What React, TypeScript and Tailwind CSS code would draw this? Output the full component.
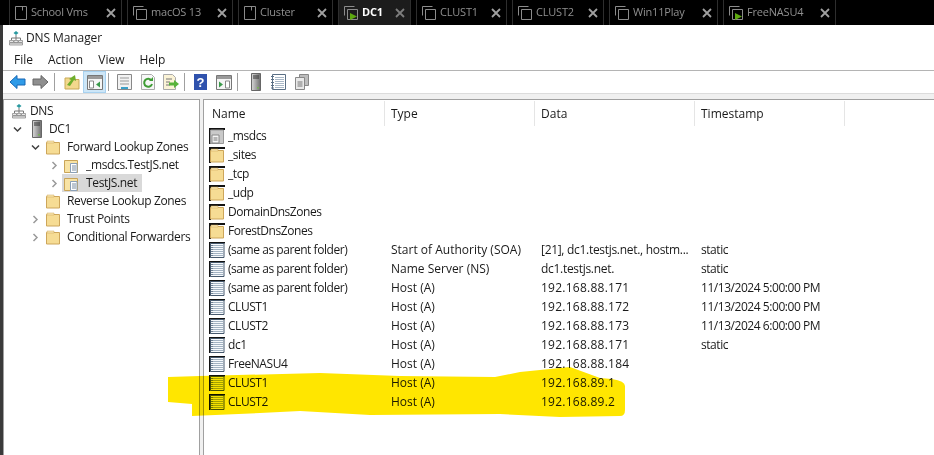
import type { ReactNode } from 'react';

const FONT = "font-['Open_Sans',_sans-serif]";

function PageIcon() {
  return (
    <svg width="14" height="16" viewBox="0 0 14 16" fill="none" stroke="#8a8a8a" strokeWidth="1">
      <path d="M1.500 1.500h11v13h-11z" />
      <path d="M8.500 1.500v4" stroke="#8a8a8a" />
    </svg>
  );
}

function StackIcon({ running }: { running?: boolean }) {
  return (
    <svg width="16" height="16" viewBox="0 0 16 16" fill="none" stroke="#8c8c8c" strokeWidth="1">
      <path d="M1.500 10.500v-9h10" />
      <path d="M4.500 4.500h10v10h-10z" />
      {running && <path d="M7 8l7 3.500-7 3.500z" fill="#5da80f" stroke="none" />}
    </svg>
  );
}

function CloseIcon({ active }: { active?: boolean }) {
  return (
    <svg width="10" height="10" viewBox="0 0 10 10" stroke={active ? '#7d7d7d' : '#a0a0a0'} strokeWidth="1.800">
      <path d="M1 1l8 8M9 1l-8 8" />
    </svg>
  );
}

interface Tab {
  label: string;
  width: string;
  icon: ReactNode;
  active?: boolean;
}

const tabs: Tab[] = [
  { label: 'School Vms', width: 'w-[113px]', icon: <PageIcon /> },
  { label: 'macOS 13', width: 'w-[106px]', icon: <StackIcon /> },
  { label: 'Cluster', width: 'w-[95px]', icon: <PageIcon /> },
  { label: 'DC1', width: 'w-[73px]', icon: <StackIcon running />, active: true },
  { label: 'CLUST1', width: 'w-[91px]', icon: <StackIcon /> },
  { label: 'CLUST2', width: 'w-[92px]', icon: <StackIcon /> },
  { label: 'Win11Play', width: 'w-[109px]', icon: <StackIcon /> },
  { label: 'FreeNASU4', width: 'w-[113px]', icon: <StackIcon running /> },
];

function ManagerIcon() {
  return (
    <svg width="14" height="16" viewBox="0 0 14 16">
      <path d="M7 1l2.500 2L7 5 4.500 3z" fill="#2b9aa0" />
      <path d="M7 5v3M2.500 10V8h9v2M7 8v2" stroke="#777" fill="none" />
      <path d="M.5 10.500h4v2h-4zM5 10.500h4v2H5zM9.500 10.500h4v2h-4zM.5 13h13v2H.5z" fill="#e8e8e8" stroke="#808080" strokeWidth=".7" />
    </svg>
  );
}

function ToolIcon({ name }: { name: string }) {
  switch (name) {
    case 'back':
      return (
        <svg width="17" height="16" viewBox="0 0 17 16">
          <path d="M1 8l7-6.500V5h8v6H8v3.500z" fill="#2f9be8" stroke="#1667b5" />
        </svg>
      );
    case 'forward':
      return (
        <svg width="17" height="16" viewBox="0 0 17 16">
          <path d="M16 8L9 1.500V5H1v6h8v3.500z" fill="#8f8f8f" stroke="#666" />
        </svg>
      );
    case 'up':
      return (
        <svg width="16" height="16" viewBox="0 0 16 16">
          <path d="M1 4h6l1 1.500h7V15H1z" fill="#f3d88d" stroke="#c9a956" />
          <path d="M3 11l4-5-2-1 6-4 1 6-2-1-4 6z" fill="#6fae2c" />
        </svg>
      );
    case 'tree':
    case 'action':
      return (
        <svg width="16" height="15" viewBox="0 0 16 15" fill="none">
          <path d="M.5.500h15v14H.5z" fill="#f5f5f5" stroke="#777" />
          <path d="M1 1h14v3H1z" fill="#9a9a9a" />
          {name === 'tree' ? (
            <>
              <path d="M2.500 6h4v7h-4z" fill="#fff" stroke="#888" />
              <path d="M13 6.500v6l-4-3z" fill="#3a9a4a" />
            </>
          ) : (
            <>
              <path d="M9.500 6h4v7h-4z" fill="#fff" stroke="#888" />
              <path d="M3 6.500v6l4-3z" fill="#3a9a4a" />
            </>
          )}
        </svg>
      );
    case 'props':
      return (
        <svg width="15" height="16" viewBox="0 0 15 16" fill="none">
          <path d="M.5.500h14v15H.5z" fill="#f2f2f2" stroke="#888" />
          <path d="M3 4h9M3 7h9M3 10h9" stroke="#999" />
          <path d="M4 14h7" stroke="#3aa0c8" strokeWidth="2" />
        </svg>
      );
    case 'refresh':
      return (
        <svg width="14" height="16" viewBox="0 0 14 16" fill="none">
          <path d="M.5.500h10l3 3v12H.5z" fill="#f7f7f7" stroke="#aaa" />
          <path d="M10.500 6.500A4 4 0 1 0 11 10" stroke="#3f9c35" strokeWidth="2" />
          <path d="M8 7h4V3z" fill="#3f9c35" />
        </svg>
      );
    case 'export':
      return (
        <svg width="16" height="16" viewBox="0 0 16 16" fill="none">
          <path d="M.5.500h9l3 3v12h-12z" fill="#fbf3d6" stroke="#aaa" />
          <path d="M3 5h6M3 8h4M3 11h4" stroke="#777" />
          <path d="M6 8.500h5V6l5 4-5 4v-2.500H6z" fill="#58b33a" />
        </svg>
      );
    case 'help':
      return (
        <svg width="13" height="16" viewBox="0 0 13 16">
          <path d="M0 0h13v16H0z" fill="#2f52ad" />
          <text x="6.500" y="13" textAnchor="middle" fontSize="13" fontWeight="700" fill="#fff" fontFamily="Liberation Sans">?</text>
        </svg>
      );
    case 'server':
      return <ServerIcon />;
    case 'list':
      return (
        <svg width="15" height="16" viewBox="0 0 15 16" fill="none">
          <path d="M1.500.500h13v15h-13z" fill="#fff" stroke="#5a6f85" />
          <path d="M0 2.500h3M0 5.500h3M0 8.500h3M0 11.500h3M0 14h3" stroke="#5a6f85" />
          <path d="M4 3.500h9M4 5.500h9M4 7.500h9M4 9.500h9M4 11.500h9M4 13.500h9" stroke="#a9b8c7" />
        </svg>
      );
    default:
      return (
        <svg width="14" height="16" viewBox="0 0 14 16" fill="none">
          <path d="M4.500.500h9v11h-9z" fill="#bdbdbd" stroke="#888" />
          <path d="M.5 3.500h9v12h-9z" fill="#e9e9e9" stroke="#888" />
          <path d="M2.500 8h5M2.500 10h5M2.500 12h5" stroke="#777" />
        </svg>
      );
  }
}

function ServerIcon() {
  return (
    <svg width="10" height="18" viewBox="0 0 10 18">
      <defs>
        <linearGradient id="srv" x1="0" x2="1" y1="0" y2="0">
          <stop offset="0" stopColor="#d8d8d8" />
          <stop offset="1" stopColor="#6f6f6f" />
        </linearGradient>
      </defs>
      <path d="M.5.500h9v17h-9z" fill="url(#srv)" stroke="#666" />
      <path d="M2 3h6M2 5h6" stroke="#333" />
      <path d="M6 14h2v1.500H6z" fill="#77b255" />
    </svg>
  );
}

function RecordIcon() {
  return (
    <svg width="16" height="16" viewBox="0 0 16 16">
      <path d="M0 0h16v1.500H1.500V16H0z" fill="#111" />
      <path d="M1.500 1.500h13.500v14H1.500z" fill="#f6f9fc" stroke="#46596e" />
      <path d="M4 3.500h10M4 5.500h10M4 7.500h10M4 9.500h10M4 11.500h10M4 13.500h10" stroke="#a3b3c3" />
      <path d="M2 3.500h2M2 5.500h2M2 7.500h2M2 9.500h2M2 11.500h2M2 13.500h2" stroke="#6f8093" />
    </svg>
  );
}

function FolderIcon({ shadow }: { shadow?: boolean }) {
  return (
    <svg width="16" height="16" viewBox="0 0 16 16">
      {shadow && <path d="M0 0h16v2H2v14H0z" fill="#111" />}
      <path d="M1.500 3.500h13v11.500h-13z" fill="#f6dc94" stroke="#cda65a" />
      <path d="M2 2h7v2H2z" fill="#f9e6ae" stroke="#cda65a" strokeWidth=".5" />
    </svg>
  );
}

function ZoneIcon() {
  return (
    <svg width="15" height="15" viewBox="0 0 15 15">
      <path d="M.5 2.500h13v12H.5z" fill="#f8e3a4" stroke="#c9a457" />
      <path d="M6.500 5.500h6.500v9H6.500z" fill="#fff" stroke="#8aa0b8" />
      <path d="M8 8h4M8 10h4M8 12h4" stroke="#7a8ea3" />
    </svg>
  );
}

function DelegationIcon() {
  return (
    <svg width="16" height="16" viewBox="0 0 16 16">
      <path d="M0 0h16v2H2v14H0z" fill="#111" />
      <path d="M1.500 2h13v13.500h-13z" fill="#c9c9c9" stroke="#999" />
      <path d="M3 7h7v8H3z" fill="#f4f4f4" stroke="#888" />
      <path d="M4.500 10h4M4.500 12h4" stroke="#777" />
    </svg>
  );
}

function Chevron({ open, dark }: { open?: boolean; dark?: boolean }) {
  return (
    <svg width="9" height="9" viewBox="0 0 9 9" fill="none" stroke={dark ? '#404040' : '#9a9a9a'} strokeWidth="1.500">
      <path d={open ? 'M1 2.500l3.500 3.500L8 2.500' : 'M2.500 1L6 4.500 2.500 8'} />
    </svg>
  );
}

const menus = ['File', 'Action', 'View', 'Help'];

// separator position in the toolbar is part of this list
const toolbar = [
  { id: 'back' },
  { id: 'forward', sep: 'mr-[5px]' },
  { id: 'up' },
  { id: 'tree', sep: 'mr-[4px]', on: true },
  { id: 'props' },
  { id: 'refresh' },
  { id: 'export', sep: 'mr-[4px]' },
  { id: 'help' },
  { id: 'action', sep: 'mr-[6px]' },
  { id: 'server' },
  { id: 'list' },
  { id: 'copy' },
];

const treeRows = [
  { label: 'DNS', pad: 'pl-[9px]', icon: <ManagerIcon />, iconBox: 'ml-[-10px] w-[18px]' },
  { label: 'DC1', pad: 'pl-[9px]', chev: 'open', icon: <ServerIcon />, iconBox: 'ml-[10px] w-[17px]' },
  { label: 'Forward Lookup Zones', pad: 'pl-[27px]', chev: 'open', icon: <FolderIcon />, iconBox: 'ml-[5px] w-[22px]' },
  { label: '_msdcs.TestJS.net', pad: 'pl-[46px]', chev: 'closed', icon: <ZoneIcon />, iconBox: 'ml-[5px] w-[22px]' },
  { label: 'TestJS.net', pad: 'pl-[46px]', chev: 'closed', icon: <ZoneIcon />, iconBox: 'w-[22px]', selected: true },
  { label: 'Reverse Lookup Zones', pad: 'pl-[27px]', icon: <FolderIcon />, iconBox: 'ml-[5px] w-[22px]' },
  { label: 'Trust Points', pad: 'pl-[27px]', chev: 'closed', icon: <FolderIcon />, iconBox: 'ml-[5px] w-[22px]' },
  { label: 'Conditional Forwarders', pad: 'pl-[27px]', chev: 'closed', icon: <FolderIcon />, iconBox: 'ml-[5px] w-[22px]' },
];

const columns = [
  { label: 'Name', width: 'w-[181px]', pad: 'pl-[8px]' },
  { label: 'Type', width: 'w-[150px]', pad: 'pl-[6px]' },
  { label: 'Data', width: 'w-[160px]', pad: 'pl-[6px]' },
  { label: 'Timestamp', width: 'w-[150px]', pad: 'pl-[6px]' },
];

const PARENT = '(same as parent folder)';

const records = [
  { name: '_msdcs', kind: 'delegation' },
  { name: '_sites', kind: 'folder' },
  { name: '_tcp', kind: 'folder' },
  { name: '_udp', kind: 'folder' },
  { name: 'DomainDnsZones', kind: 'folder' },
  { name: 'ForestDnsZones', kind: 'folder' },
  { name: PARENT, type: 'Start of Authority (SOA)', data: '[21], dc1.testjs.net., hostm...', time: 'static' },
  { name: PARENT, type: 'Name Server (NS)', data: 'dc1.testjs.net.', time: 'static' },
  { name: PARENT, type: 'Host (A)', data: '192.168.88.171', time: '11/13/2024 5:00:00 PM' },
  { name: 'CLUST1', type: 'Host (A)', data: '192.168.88.172', time: '11/13/2024 5:00:00 PM' },
  { name: 'CLUST2', type: 'Host (A)', data: '192.168.88.173', time: '11/13/2024 6:00:00 PM' },
  { name: 'dc1', type: 'Host (A)', data: '192.168.88.171', time: 'static' },
  { name: 'FreeNASU4', type: 'Host (A)', data: '192.168.88.184' },
  { name: 'CLUST1', type: 'Host (A)', data: '192.168.89.1' },
  { name: 'CLUST2', type: 'Host (A)', data: '192.168.89.2' },
];

export default function App() {
  return (
    <div className={`relative h-[455px] w-[934px] overflow-hidden bg-white text-[12px] text-[#1a1a1a] ${FONT}`}>
      {/* Tab strip */}
      <div className="flex h-[25px] gap-[5px] bg-black pl-[9px]">
        {tabs.map((tab) => (
          <div
            key={tab.label}
            className={`flex items-center gap-[3px] border-x border-[#2e2e2e] pl-[4px] text-[11px] ${tab.width} ${tab.active ? 'bg-[#1c1c1c] font-bold text-white' : 'text-[#8f8f8f]'}`}
          >
            {tab.icon}
            <span className="flex-1 whitespace-nowrap tracking-[-0.2px]">{tab.label}</span>
            <span className="mr-[5px]">
              <CloseIcon active={tab.active} />
            </span>
          </div>
        ))}
      </div>

      <div className="flex h-[430px]">
        <div className="w-[3px] bg-[#3a3a3a]" />
        <div className="flex min-w-0 flex-1 flex-col">
          {/* Title */}
          <div className="flex h-[25px] items-center gap-[3px] pl-[6px]">
            <ManagerIcon />
            <span className="tracking-[-0.1px]">DNS Manager</span>
          </div>
          {/* Menu */}
          <div className="flex h-[21px] items-center gap-[15px] border-b border-[#b4b4b4] pl-[11px]">
            {menus.map((m) => (
              <span key={m}>{m}</span>
            ))}
          </div>
          {/* Toolbar */}
          <div className="flex h-[23px] items-center border-b border-[#dcdcdc] pl-[3px]">
            {toolbar.map((t) => (
              <div key={t.id} className="flex items-center">
                <div
                  className={`flex h-[22px] w-[23px] items-center justify-center ${t.on ? 'border border-[#a8d2f0] bg-[#cde6f7]' : ''}`}
                >
                  <ToolIcon name={t.id} />
                </div>
                {t.sep && <div className={`ml-[2px] h-[18px] w-px bg-[#a0a0a0] ${t.sep}`} />}
              </div>
            ))}
          </div>

          {/* Panes */}
          <div className="flex min-h-0 flex-1 gap-[3px] bg-[#f0f0f0] pt-[5px]">
            <div className="w-[197px] border-t border-r border-l border-[#a0a0a0] bg-white pt-[2px] tracking-[-0.35px]">
              {treeRows.map((row) => (
                <div key={row.label} className={`flex h-[18px] items-center whitespace-nowrap ${row.pad}`}>
                  <span className="flex w-[9px] items-center">
                    {row.chev && <Chevron open={row.chev === 'open'} dark={row.chev === 'open'} />}
                  </span>
                  {row.selected ? (
                    <span className="ml-[3px] flex h-[18px] items-center bg-[#d9d9d9] pr-[5px] pl-[2px]">
                      <span className={`flex items-center ${row.iconBox}`}>{row.icon}</span>
                      {row.label}
                    </span>
                  ) : (
                    <>
                      <span className={`flex items-center ${row.iconBox}`}>{row.icon}</span>
                      {row.label}
                    </>
                  )}
                </div>
              ))}
            </div>

            <div className="min-w-0 flex-1 border-t border-l border-[#a0a0a0] bg-white">
              <div className="flex h-[26px] pt-px">
                {columns.map((c) => (
                  <div key={c.label} className={`flex items-center border-r border-[#e5e5e5] ${c.pad} ${c.width}`}>
                    {c.label}
                  </div>
                ))}
              </div>
              {records.map((r, i) => (
                <div key={i} className="flex h-[19px] items-center whitespace-nowrap">
                  <div className="flex w-[181px] items-center gap-[3px] pl-[5px] tracking-[-0.45px]">
                    {r.kind === 'delegation' ? <DelegationIcon /> : r.kind === 'folder' ? <FolderIcon shadow /> : <RecordIcon />}
                    <span>{r.name}</span>
                  </div>
                  <div className="w-[150px] pl-[6px]">{r.type}</div>
                  <div className={`w-[160px] pl-[6px] ${r.data?.startsWith('192') ? 'tracking-[0.25px]' : 'tracking-[-0.3px]'}`}>{r.data}</div>
                  <div className="pl-[6px] tracking-[-0.45px]">{r.time}</div>
                </div>
              ))}
            </div>
          </div>
        </div>
      </div>

      {/* Highlighter stroke */}
      <svg className="pointer-events-none absolute inset-0 mix-blend-multiply" width="934" height="455" viewBox="0 0 934 455">
        <path
          d="M168 377L168 402L192 404L192 416L260 413L300 411L370 415L500 414L560 417L620 416Q625 416 625 410L625 386Q625 381 612 379L600 378L570 367L520 372L495 377L400 376L320 373L200 376Z"
          fill="#ffe600"
        />
      </svg>
    </div>
  );
}
